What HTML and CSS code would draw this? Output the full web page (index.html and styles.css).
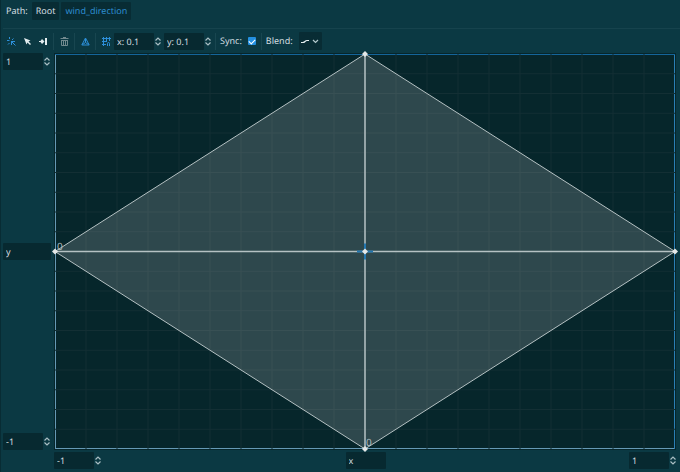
FILE: index.html
```html
<!DOCTYPE html>
<html lang="en">
<head>
  <meta charset="UTF-8" />
  <meta name="viewport" content="width=device-width, initial-scale=1.0"/>
  <title>Blend Space 2D</title>
  <link rel="stylesheet" href="styles.css">
</head>
<body>

  <!-- Shared up/down arrows -->
  <svg class="defs" aria-hidden="true">
    <symbol id="updown" viewBox="0 0 8 9">
      <path d="M1.500 3.500L4 1L6.500 3.500M1.500 5.500L4 8L6.500 5.500" fill="none" stroke="#a9bec3" stroke-width="1.200"/>
    </symbol>
  </svg>

  <div class="editor">

    <!-- Path -->
    <nav class="path-bar">
      <span>Path:</span>
      <button class="crumb">Root</button>
      <button class="crumb current">wind_direction</button>
    </nav>

    <!-- Toolbar -->
    <div class="toolbar">
      <div class="group tools">
        <button class="tool" aria-label="Set blend position">
          <svg width="9" height="9" viewBox="0 0 9 9" fill="none" stroke="#2d8fd8">
            <path d="M2.500 0v2M0 3.500h2.500M6.500 1.500L5 3M2.500 6L1 7.500M4 4.500h4M4.500 4v4M5 5l3.500 3.500"/>
          </svg>
        </button>
        <button class="tool" aria-label="Select and move points">
          <svg width="9" height="9" viewBox="0 0 9 9" fill="#e4eef0">
            <path d="M1 1L7.500 3.500L5.500 4.500L8 7L7 8L4.500 5.500L3.500 7.500Z"/>
          </svg>
        </button>
        <button class="tool" aria-label="Create points">
          <svg width="9" height="9" viewBox="0 0 9 9" fill="#e4eef0">
            <path d="M0 4h1.500L3 2L5.500 4.500L3 7L1.500 5H0z"/>
            <path d="M6 1h2v7H6z"/>
          </svg>
        </button>
      </div>
      <div class="group">
        <button class="tool" aria-label="Erase points" disabled>
          <svg width="9" height="9" viewBox="0 0 9 9" fill="none" stroke="#71898e">
            <path d="M3 .5h3M.5 1.500h8M1 3.500h7M1.500 4v4.500h6V4M3.500 4v4M5.500 4v4"/>
          </svg>
        </button>
      </div>
      <div class="group">
        <button class="tool" aria-label="Generate triangles automatically">
          <svg width="9" height="9" viewBox="0 0 9 9" fill="none" stroke="#2d8fd8">
            <path d="M4.500 1L8.200 8H.8ZM4.500 2v3.500M1.500 7.500L4.500 5.500L7.500 7.500"/>
          </svg>
        </button>
      </div>
      <div class="group snap">
        <button class="tool" aria-label="Enable snap and show grid">
          <svg width="9" height="9" viewBox="0 0 9 9" fill="none" stroke="#2d8fd8">
            <path d="M1.500 0v9M4.500 0v5M7.500 0v4M0 1.500h9M0 4.500h5M0 7.500h4M5.500 9V6.500a1 1 0 0 1 2 0V9"/>
          </svg>
        </button>
        <div class="spin">
          <input type="text" value="x: 0.1" aria-label="Snap x">
          <button aria-label="Step snap x"><svg><use href="#updown"/></svg></button>
        </div>
        <div class="spin">
          <input type="text" value="y: 0.1" aria-label="Snap y">
          <button aria-label="Step snap y"><svg><use href="#updown"/></svg></button>
        </div>
      </div>
      <div class="group option">
        <label for="sync">Sync:</label>
        <input type="checkbox" id="sync" checked>
      </div>
      <div class="group option">
        <label for="blend">Blend:</label>
        <div class="dropdown">
          <select id="blend"><option value="interpolated"></option></select>
          <svg width="18" height="8" viewBox="0 0 18 8" fill="none">
            <path d="M0 5.500H2C4 5.500 4 3.500 6 3.500H8" stroke="#e4eef0" stroke-width="1.200"/>
            <path d="M12 3L14.500 5.500L17 3" stroke="#b3c8cc" stroke-width="1.200"/>
          </svg>
        </div>
      </div>
    </div>

    <!-- Blend space -->
    <div class="space">
      <div class="axis axis-y">
        <div class="spin">
          <input type="text" value="1" aria-label="Maximum y">
          <button aria-label="Step maximum y"><svg><use href="#updown"/></svg></button>
        </div>
        <input type="text" class="axis-name" value="y" aria-label="Y axis label">
        <div class="spin">
          <input type="text" value="-1" aria-label="Minimum y">
          <button aria-label="Step minimum y"><svg><use href="#updown"/></svg></button>
        </div>
      </div>

      <div class="plot">
        <svg class="graph">
          <svg viewBox="0 0 20 20" preserveAspectRatio="none">
            <path class="grid" d="M1 0V20M2 0V20M3 0V20M4 0V20M5 0V20M6 0V20M7 0V20M8 0V20M9 0V20M10 0V20M11 0V20M12 0V20M13 0V20M14 0V20M15 0V20M16 0V20M17 0V20M18 0V20M19 0V20M0 1H20M0 2H20M0 3H20M0 4H20M0 5H20M0 6H20M0 7H20M0 8H20M0 9H20M0 10H20M0 11H20M0 12H20M0 13H20M0 14H20M0 15H20M0 16H20M0 17H20M0 18H20M0 19H20"/>
            <path class="triangles" d="M10 0L20 10L10 20L0 10Z"/>
            <path class="axes" d="M10 0V20M0 10H20"/>
          </svg>
          <text x="2" y="50%" dy="-2">0</text>
          <text x="50%" y="100%" dx="1" dy="-3">0</text>
          <svg x="50%" y="50%" class="mark"><path class="cursor" d="M-8 0H8M0 -8V8"/><path d="M-3 0L0 -3L3 0L0 3Z"/></svg>
          <svg x="50%" y="0" class="mark"><path d="M-3 0L0 -3L3 0L0 3Z"/></svg>
          <svg x="100%" y="50%" class="mark"><path d="M-3 0L0 -3L3 0L0 3Z"/></svg>
          <svg x="50%" y="100%" class="mark"><path d="M-3 0L0 -3L3 0L0 3Z"/></svg>
          <svg x="0" y="50%" class="mark"><path d="M-3 0L0 -3L3 0L0 3Z"/></svg>
        </svg>
      </div>

      <div class="axis axis-x">
        <div class="spin">
          <input type="text" value="-1" aria-label="Minimum x">
          <button aria-label="Step minimum x"><svg><use href="#updown"/></svg></button>
        </div>
        <input type="text" class="axis-name" value="x" aria-label="X axis label">
        <div class="spin">
          <input type="text" value="1" aria-label="Maximum x">
          <button aria-label="Step maximum x"><svg><use href="#updown"/></svg></button>
        </div>
      </div>
    </div>

  </div>
</body>
</html>
```

FILE: styles.css
```css
* {
  box-sizing: border-box;
}

body {
  margin: 0;
  background: #0b3943;
  color: #d3dee0;
  font-family: "Noto Sans", sans-serif;
  font-size: 9px;
  line-height: 14px;
  text-rendering: geometricPrecision;
}

button, input, select {
  margin: 0;
  padding: 0;
  border: none;
  background: none;
  color: inherit;
  font: inherit;
  text-rendering: inherit;
}

.defs {
  position: absolute;
  width: 0;
  height: 0;
}

.editor {
  display: flex;
  flex-direction: column;
  min-height: 100vh;
  padding: 2px 0 3px 2px;
  border-left: 1px solid #082c34;
}

/* Path */
.path-bar {
  display: flex;
  align-items: center;
  gap: 2px;
  height: 26px;
  padding: 0 3px 8px;
}

.path-bar span {
  margin-right: 2px;
}

.crumb {
  height: 18px;
  padding: 0 4px;
  background: #082c34;
  border-radius: 1px;
}

.crumb.current {
  color: #2d8cd0;
}

/* Toolbar */
.toolbar {
  display: flex;
  align-items: center;
  height: 25px;
  border-top: 1px solid #16434d;
}

.group {
  display: flex;
  align-items: center;
  height: 17px;
  padding: 0 2px;
  border-left: 1px solid #184650;
}

.group.tools {
  padding-left: 0;
  border-left: none;
}

.tool {
  display: flex;
  align-items: center;
  justify-content: center;
  width: 16px;
  height: 16px;
}

.group.snap {
  padding-right: 3px;
}

.snap .spin + .spin {
  margin-left: 2px;
}

.group.option {
  gap: 6px;
  padding: 0 5px 0 4px;
}

input[type="checkbox"] {
  appearance: none;
  width: 8px;
  height: 8px;
  border-radius: 1px;
  background: #2490e0;
  display: grid;
  place-items: center;
}

input[type="checkbox"]:checked::after {
  content: "";
  width: 5px;
  height: 3px;
  border-left: 1px solid #fff;
  border-bottom: 1px solid #fff;
  transform: rotate(-45deg);
}

.dropdown {
  display: grid;
  place-items: center;
}

.dropdown select {
  grid-area: 1 / 1;
  width: 23px;
  height: 18px;
  appearance: none;
  background: #082c34;
  border-radius: 1px;
}

.dropdown svg {
  grid-area: 1 / 1;
  pointer-events: none;
}

/* Number fields */
input[type="text"] {
  width: 40px;
  height: 17px;
  padding: 0 3px;
  background: #072930;
  border-radius: 1px;
}

.spin {
  display: flex;
  align-items: center;
}

.spin svg {
  display: block;
  width: 8px;
  height: 9px;
}

/* Blend space */
.space {
  flex: 1;
  display: grid;
  grid-template-columns: 51px 1fr;
  grid-template-rows: 1fr 17px;
  row-gap: 2px;
}

.axis {
  display: flex;
  justify-content: space-between;
}

.axis-y {
  flex-direction: column;
}

.axis-y .axis-name {
  width: 48px;
}

.axis-x {
  grid-column: 2;
  padding-right: 3px;
}

.plot {
  margin-right: 4px;
  padding: 1px;
  background: #06262b;
}

.graph {
  display: block;
  width: 100%;
  height: 100%;
  overflow: visible;
  box-shadow:
    inset 0 1px #14659a,
    inset -1px 0 #2a7fb5,
    inset 1px 0 #6599b5,
    inset 0 -1px #6599b5;
}

.graph text {
  fill: #b0bdc0;
  font-size: 10px;
}

.grid {
  fill: none;
  stroke: #132f34;
  vector-effect: non-scaling-stroke;
}

.triangles {
  fill: rgba(255, 255, 255, 0.16);
  stroke: #b5c1c3;
  vector-effect: non-scaling-stroke;
}

.axes {
  fill: none;
  stroke: #b5c1c3;
  stroke-width: 1.5px;
  vector-effect: non-scaling-stroke;
}

.mark {
  overflow: visible;
  fill: #e4e8e8;
}

.cursor {
  fill: none;
  stroke: #2377b0;
  stroke-width: 2px;
}
```
